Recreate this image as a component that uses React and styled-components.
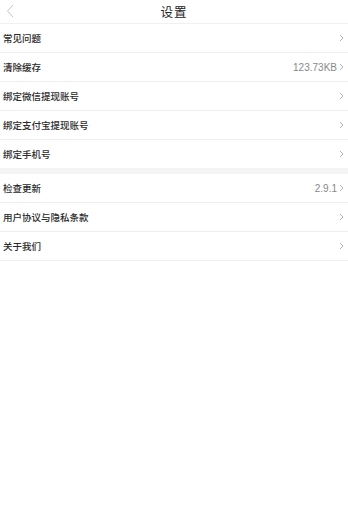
import React from 'react'
import styled, { createGlobalStyle } from 'styled-components'

const GlobalStyle = createGlobalStyle`
  body {
    margin: 0;
    background: #fff;
    font-family: "Noto Sans CJK SC", "Noto Sans", sans-serif;
  }
`

const Page = styled.div`
  width: 348px;
  min-height: 521px;
  background: #fff;
`

const Header = styled.div`
  display: flex;
  align-items: center;
  justify-content: center;
  position: relative;
  height: 23px;
  border-bottom: 1px solid #f0f0f0;
`

const Title = styled.div`
  font-size: 12.5px;
  color: #222;
  letter-spacing: 1px;
`

const BackButton = styled.div`
  position: absolute;
  left: 6px;
  top: 4px;
  display: flex;
`

const Group = styled.div`
  border-bottom: ${(props) => (props.last ? '0' : '6px solid #f4f4f4')};
`

const Row = styled.div`
  display: flex;
  align-items: center;
  justify-content: space-between;
  height: 28px;
  padding: 0 4px 0 3px;
  border-bottom: 1px solid #eeeeee;
  ${(props) => props.noBorder && 'border-bottom: none;'}
`

const Label = styled.span`
  font-size: 9.5px;
  color: #2a2a2a;
  font-weight: 500;
`

const Right = styled.div`
  display: flex;
  align-items: center;
  gap: 2px;
`

const Value = styled.span`
  font-family: "Liberation Sans", Arial, sans-serif;
  font-size: 10px;
  color: #888;
`

const Chevron = () => (
  <svg width="5" height="8" viewBox="0 0 5 8">
    <path d="M1 1l3 3-3 3" fill="none" stroke="#aaa" strokeWidth="0.9" />
  </svg>
)

const groups = [
  [
    { label: '常见问题' },
    { label: '清除缓存', value: '123.73KB' },
    { label: '绑定微信提现账号' },
    { label: '绑定支付宝提现账号' },
    { label: '绑定手机号' },
  ],
  [
    { label: '检查更新', value: '2.9.1' },
    { label: '用户协议与隐私条款' },
    { label: '关于我们' },
  ],
]

export default function App() {
  return (
    <Page>
      <GlobalStyle />
      <Header>
        <BackButton>
          <svg width="8" height="14" viewBox="0 0 8 14">
            <path d="M7 1L1.5 7 7 13" fill="none" stroke="#bbb" strokeWidth="0.9" />
          </svg>
        </BackButton>
        <Title>设置</Title>
      </Header>
      {groups.map((items, gi) => (
        <Group key={gi} last={gi === groups.length - 1}>
          {items.map((item, i) => (
            <Row key={item.label} noBorder={gi === 0 && i === items.length - 1}>
              <Label>{item.label}</Label>
              <Right>
                {item.value && <Value>{item.value}</Value>}
                <Chevron />
              </Right>
            </Row>
          ))}
        </Group>
      ))}
    </Page>
  )
}
